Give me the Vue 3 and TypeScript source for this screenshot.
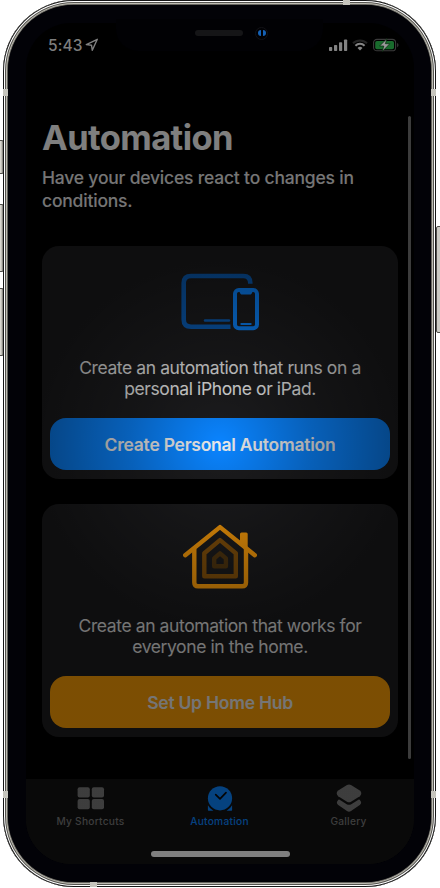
<script setup lang="ts">
interface AutomationCard {
  id: 'personal' | 'home'
  lines: string[]
  action: string
}

interface Tab {
  id: 'shortcuts' | 'automation' | 'gallery'
  label: string
}

const cards: AutomationCard[] = [
  {
    id: 'personal',
    lines: ['Create an automation that runs on a', 'personal iPhone or iPad.'],
    action: 'Create Personal Automation',
  },
  {
    id: 'home',
    lines: ['Create an automation that works for', 'everyone in the home.'],
    action: 'Set Up Home Hub',
  },
]

const tabs: Tab[] = [
  { id: 'shortcuts', label: 'My Shortcuts' },
  { id: 'automation', label: 'Automation' },
  { id: 'gallery', label: 'Gallery' },
]
const activeTab: Tab['id'] = 'automation'
</script>

<template>
  <div class="stage">
    <span class="key mute"></span>
    <span class="key up"></span>
    <span class="key down"></span>
    <span class="key power"></span>
    <div class="phone">
      <span class="band top"></span>
      <span class="band bottom"></span>
      <span class="band left-a"></span>
      <span class="band left-b"></span>
      <span class="band right-a"></span>
      <span class="band right-b"></span>
      <div class="bezel">
        <div class="notch">
          <span class="speaker"></span>
          <span class="camera"><i></i><i></i></span>
        </div>
        <div class="screen">
          <header class="status">
            <span class="time">5:43</span>
            <svg class="location" width="14" height="14" viewBox="0 0 14 14">
              <path d="M1.3 6.6 12.3 1.3 7.3 12.3 6.5 7.2Z" fill="none" stroke="#808080" stroke-width="1.4" stroke-linejoin="round" />
            </svg>
            <svg class="signal" width="19" height="13" viewBox="0 0 19 13">
              <g fill="#838383">
                <rect x="0" y="8" width="3.2" height="4" rx=".8" />
                <rect x="5" y="6" width="3.2" height="6" rx=".8" />
                <rect x="10" y="3.2" width="3.2" height="8.8" rx=".8" />
                <rect x="15" y="0.5" width="3.2" height="11.5" rx=".8" />
              </g>
            </svg>
            <svg class="wifi" width="16" height="12" viewBox="0 0 16 12">
              <g fill="none">
                <path d="M1 4.3a10 10 0 0 1 14 0" stroke="#242424" stroke-width="2" />
                <path d="M3.4 6.7a6.6 6.6 0 0 1 9.2 0" stroke="#858585" stroke-width="2" />
              </g>
              <path d="M5.5 8.9a3.6 3.6 0 0 1 5 0L8 11.5Z" fill="#858585" />
            </svg>
            <svg class="battery" width="27" height="14" viewBox="0 0 27 14">
              <rect x=".6" y="1.4" width="22" height="11.4" rx="3.4" fill="none" stroke="#3b3b3b" stroke-width="1.1" />
              <rect x="2.2" y="3" width="18.8" height="8.2" rx="1.8" fill="#196b2d" />
              <path d="M24 5v4.2q1.6-.6 1.6-2.1T24 5Z" fill="#333" />
              <path d="M14 .6 6.600 8h4.200L9.200 13.600l7.600-7.900h-4.400Z" fill="#999" stroke="#062a0c" stroke-width=".7" />
            </svg>
          </header>

          <main class="content">
            <h1>Automation</h1>
            <p class="intro">Have your devices react to changes in<br />conditions.</p>

            <section v-for="card in cards" :key="card.id" class="card" :class="card.id">
              <div class="art">
                <svg v-if="card.id === 'personal'" width="78" height="58" viewBox="0 0 78 58">
                  <g fill="none" stroke="#0a5cb4">
                    <path d="M69.3 10.7V10Q69.3 3 62.3 3H10.1Q2.7 3 2.7 10V46.5Q2.7 53.7 10.1 53.7H49.5" stroke-width="4.6" />
                    <path d="M24 47.5H48" stroke-width="2.4" stroke-linecap="round" />
                  </g>
                  <rect x="54" y="17" width="22" height="38.2" rx="3.8" fill="none" stroke="#0a84ff" stroke-width="4" />
                  <path d="M58 18h14l-1.3 2.6q-.2.8-1 .8h-9.4q-.8 0-1-.8Z" fill="#0a84ff" />
                  <path d="M60.3 51h9.4" stroke="#0a84ff" stroke-width="2" stroke-linecap="round" />
                </svg>
                <svg v-else width="74" height="66" viewBox="0 0 74 66">
                  <g fill="none" stroke-linejoin="round">
                    <path d="M2.2 31.2 37 3.1 71.8 31.2" stroke="#ff9f0a" stroke-width="4.4" stroke-linecap="round" />
                    <path d="M11.3 25V58.5Q11.3 62.3 15.1 62.3H59.2Q63 62.3 63 58.5V25" stroke="#ff9f0a" stroke-width="4.4" />
                    <path d="M21.3 29.2 37 16.1 52.8 29.2V52.2H21.3Z" stroke="#85520b" stroke-width="4.4" />
                    <path d="M31.2 34.4 37 29.3 42.9 34.4V42.3H31.2Z" stroke="#523710" stroke-width="4.4" />
                  </g>
                  <path d="M57 20V10q0-1.5 1.5-1.5h4.7q1.5 0 1.5 1.5V26Z" fill="#ff9f0a" />
                </svg>
              </div>
              <p class="blurb"><span v-for="line in card.lines" :key="line">{{ line }}</span></p>
              <button type="button">{{ card.action }}</button>
            </section>
          </main>

          <nav class="tabs">
            <a v-for="tab in tabs" :key="tab.id" :class="[tab.id, { active: tab.id === activeTab }]">
              <svg v-if="tab.id === 'shortcuts'" width="28" height="28" viewBox="0 0 28 28">
                <rect x=".6" y="2.2" width="12.2" height="10.2" rx="2" />
                <rect x="14.8" y="2.2" width="12.2" height="10.2" rx="2" />
                <rect x=".6" y="14" width="12.2" height="10.2" rx="2" />
                <rect x="14.8" y="14" width="12.2" height="10.2" rx="2" />
              </svg>
              <svg v-else-if="tab.id === 'automation'" width="28" height="28" viewBox="0 0 28 28">
                <circle cx="14" cy="13.3" r="12.1" />
                <path d="M1.900 20.200q2 3.600 5.500 5.500H2.600q-.7 0-.7-.7ZM26.100 20.200q-2 3.600-5.500 5.500h4.800q.7 0 .7-.7Z" />
                <path d="M9.700 9.700 14 13.900 20 7.700" fill="none" stroke="#090909" stroke-width="1.7" stroke-linecap="round" stroke-linejoin="round" />
              </svg>
              <svg v-else width="28" height="28" viewBox="0 0 28 28">
                <path d="M12 0q2-1 4 0l8.800 5.600q3 2.600 0 5.600L16 16.700q-2 1.200-4 0L3.200 11.200q-3-3 0-5.600Z" />
                <path d="M3.400 14.800Q4 14.400 4.600 14.800L11.700 19.200q2.300 1.300 4.600 0l7.100-4.400q.6-.4 1.200 0 3 3 .2 5.300L16 26.100q-2 1.300-4 0L3.200 20.100q-2.800-2.300.2-5.300Z" />
              </svg>
              <span>{{ tab.label }}</span>
            </a>
          </nav>
          <span class="indicator"></span>
          <span class="scrollbar"></span>
          <span class="dim"></span>
        </div>
      </div>
    </div>
  </div>
</template>

<style>
body {
  background: #fff;
}
</style>

<style scoped>
.stage {
  position: relative;
  box-sizing: border-box;
  width: 440px;
  height: 888px;
  padding: 0 4px 1px 3px;
  overflow: hidden;
  font-family: Inter, 'Liberation Sans', sans-serif;
}
.key {
  position: absolute;
  left: -2px;
  box-sizing: border-box;
  width: 6px;
  border: 1px solid #4f4e4a;
  border-radius: 2px;
  background: linear-gradient(90deg, #d8d6cf 50%, #77756f);
}
.mute { top: 140px; height: 34px; }
.up { top: 204px; height: 68px; }
.down { top: 288px; height: 68px; }
.power { left: 436px; top: 226px; height: 107px; background: #cbcac4; }
.phone {
  position: relative;
  box-sizing: border-box;
  height: 887px;
  padding: 5px;
  border-radius: 71px;
  background: #020207;
  box-shadow:
    inset 0 0 0 1px #161616,
    inset 0 0 0 2px #fff,
    inset 0 0 0 3px #55544f,
    inset 0 0 0 4px #bebcb3,
    inset 0 0 0 5px #66655f;
}
.band {
  position: absolute;
  background: #c6c5bd;
}
.top { left: 340px; top: 0; width: 7px; height: 5px; }
.bottom { left: 87px; bottom: 0; width: 7px; height: 5px; }
.left-a, .left-b { left: 0; width: 5px; height: 7px; }
.right-a, .right-b { right: 0; width: 5px; height: 7px; }
.left-a, .right-a { top: 89px; }
.left-b, .right-b { top: 791px; }
.bezel {
  position: relative;
  box-sizing: border-box;
  height: 877px;
  padding: 18px 17px 18px 18px;
  border-radius: 66px;
  background: #020207;
}
.notch {
  position: absolute;
  z-index: 2;
  left: 108px;
  top: 14px;
  display: flex;
  align-items: center;
  justify-content: flex-end;
  box-sizing: border-box;
  width: 207px;
  height: 32px;
  padding: 0 54px 4px 0;
  gap: 13px;
  border-radius: 0 0 22px 22px;
  background: #010104;
}
.speaker {
  width: 48px;
  height: 6px;
  border-radius: 3px;
  background: #151517;
}
.camera {
  display: flex;
  align-items: center;
  justify-content: center;
  gap: 2px;
  box-sizing: border-box;
  width: 13px;
  height: 13px;
  margin-right: 1px;
  margin-left: -1px;
  border: 1px solid #111116;
  border-radius: 50%;
}
.camera i {
  flex: none;
  width: 3px;
  height: 6px;
  border-radius: 3px 0 0 3px;
  background: #1561b5;
}
.camera i + i { border-radius: 0 3px 3px 0; }
.screen {
  position: relative;
  display: flex;
  flex-direction: column;
  height: 841px;
  border-radius: 45px;
  overflow: hidden;
  background: #000;
}
.status {
  display: flex;
  align-items: center;
  height: 44px;
  color: #7d7d7d;
}
.time {
  margin-left: 22px;
  width: 35px;
  font-size: 15.5px;
  font-weight: 500;
  letter-spacing: 0.1px;
}
.location { margin-left: 2px; }
.signal { margin-left: 230px; }
.wifi { margin-left: 4px; }
.battery { margin-left: 5px; }
.content {
  flex: 1;
  padding: 50px 16px 0;
}
h1 {
  margin: 0;
  color: #fff;
  font-size: 34.5px;
  font-weight: 700;
  line-height: 42px;
  letter-spacing: -0.6px;
}
.intro {
  margin: 7px 0 34px;
  color: #ebebeb;
  font-size: 17.5px;
  font-weight: 500;
  line-height: 23px;
  letter-spacing: -0.2px;
}
.card {
  display: flex;
  flex-direction: column;
  box-sizing: border-box;
  height: 233px;
  margin-bottom: 25px;
  padding: 0 8px 9px;
  border-radius: 17px;
  background: #1c1c1e;
}
.art {
  display: flex;
  justify-content: center;
  height: 111px;
}
.personal .art svg { margin-top: 27px; }
.home .art svg { margin-top: 20px; }
.blurb {
  flex: 1;
  margin: 0;
  color: #e9e9e9;
  font-size: 17.5px;
  line-height: 21px;
  letter-spacing: -0.4px;
  text-align: center;
}
.blurb span { display: block; }
button {
  height: 52px;
  padding: 1px 0 0;
  border: 0;
  border-radius: 16px;
  color: #eaeaea;
  font: 600 17.5px/51px Inter, 'Liberation Sans', sans-serif;
  letter-spacing: -0.25px;
}
.personal button { background: #0a84ff; }
.home button { background: #f89c05; }
.tabs {
  display: flex;
  box-sizing: border-box;
  height: 85px;
  padding: 6px 1px 0 0;
  background: #121212;
}
.tabs a {
  display: flex;
  flex: 1;
  flex-direction: column;
  align-items: center;
  gap: 2px;
  color: #7b7b7b;
  font-size: 10.2px;
  font-weight: 500;
  line-height: 13px;
  letter-spacing: 0.25px;
}
.tabs svg { fill: currentColor; overflow: visible; }
.tabs .active { color: #0a84ff; }
.indicator {
  position: absolute;
  left: 125px;
  bottom: 7px;
  width: 139px;
  height: 6px;
  border-radius: 3px;
  background: #fff;
}
.scrollbar {
  position: absolute;
  left: 382px;
  top: 93px;
  width: 3px;
  height: 643px;
  border-radius: 2px;
  background: #797979;
}
.dim {
  position: absolute;
  inset: 44px 0 0;
  background: radial-gradient(circle at 194px 377px, transparent 0, rgba(0, 0, 0, 0.27) 90px, rgba(0, 0, 0, 0.5) 185px);
}
</style>
